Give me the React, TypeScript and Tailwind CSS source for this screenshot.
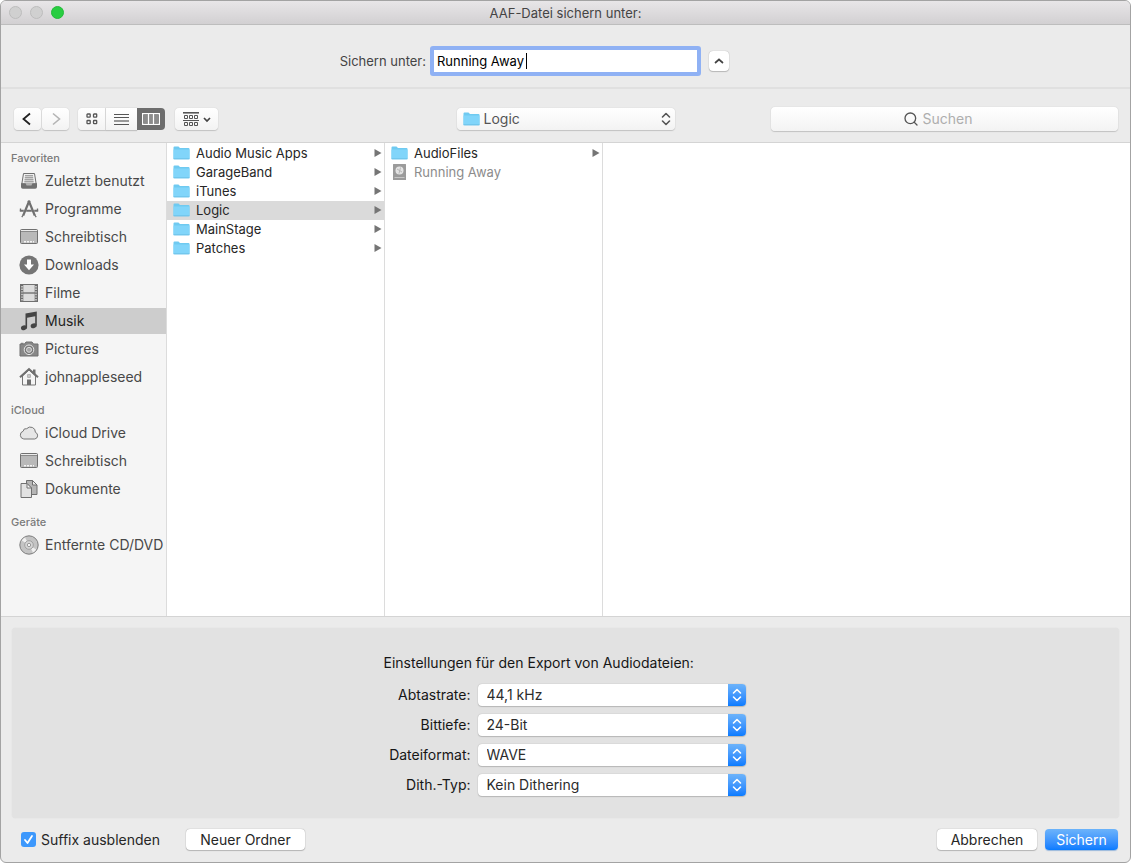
import type { ReactNode } from 'react';
import { Search } from 'lucide-react';

const RecentIcon = () => (
  <svg viewBox="0 0 20 20" className="w-5 h-5">
    <path d="M4.5 2.5h11l1.7 10.5H2.8z" fill="#f0f0f0" stroke="#707070" />
    <path d="M6 4.8h8M5.8 6.8h8.4M5.5 8.8h9M5.3 10.8h9.4" stroke="#808080" />
    <path d="M2 12.3h4.5l1 2h5l1-2H18V16a1.8 1.8 0 0 1-1.8 1.8H3.8A1.8 1.8 0 0 1 2 16z" fill="#707070" />
  </svg>
);

const AppsIcon = () => (
  <svg viewBox="0 0 20 20" className="w-5 h-5" fill="none" stroke="#707070">
    <path d="M10 2.5 4.2 16.5M10 2.5l5.8 14" strokeWidth="2.2" />
    <path d="M.8 11.8h4M7.2 11.8h5.6M15.2 11.8h4" strokeWidth="2" />
    <path d="M1.5 9.5v2.3M18.5 9.5v2.3M4.2 16l-1.4 2.2M15.8 16l1.4 2.2" strokeWidth="1.3" />
    <circle cx="10" cy="2.6" r="1.4" fill="#707070" stroke="none" />
  </svg>
);

const DesktopIcon = () => (
  <svg viewBox="0 0 20 20" className="w-5 h-5">
    <rect x="1.5" y="2.5" width="17" height="14" rx="1" fill="#b9b9b9" stroke="#707070" />
    <path d="M2 3.5h16" stroke="#ececec" />
    <path d="M2 4.5h16" stroke="#8a8a8a" />
    <path d="M5 14.8h2M8 14.8h2M11 14.8h2M14 14.8h1" stroke="#f4f4f4" strokeWidth="1.5" />
  </svg>
);

const DownloadIcon = () => (
  <svg viewBox="0 0 20 20" className="w-5 h-5">
    <circle cx="10" cy="10" r="9.6" fill="#757575" />
    <path d="M8 4.5h4v5h3L10 15.3 5 9.5h3z" fill="#fff" />
  </svg>
);

const FilmIcon = () => (
  <svg viewBox="0 0 20 20" className="w-5 h-5">
    <rect x="1.5" y="1.5" width="17" height="17" fill="#dcdcdc" stroke="#707070" />
    <path d="M3 2v16M17 2v16" stroke="#6b6b6b" strokeWidth="2.6" />
    <path d="M3 3v15M17 3v15" stroke="#e8e8e8" strokeWidth="1.3" strokeDasharray="1.4 1.2" />
    <path d="M4 10h12" stroke="#707070" strokeWidth="1.4" />
  </svg>
);

const MusicIcon = () => (
  <svg viewBox="0 0 20 20" className="w-5 h-5" fill="#454545">
    <path d="M6.5 2.4 17.8.6v13.6h-1.6V5.3L8.1 6.7v9.6H6.5z" />
    <ellipse cx="5" cy="16.8" rx="3.1" ry="2.3" transform="rotate(-18 5 16.8)" />
    <ellipse cx="14.7" cy="14.7" rx="3.1" ry="2.3" transform="rotate(-18 14.7 14.7)" />
  </svg>
);

const CameraIcon = () => (
  <svg viewBox="0 0 20 20" className="w-5 h-5">
    <path d="M1 5h4.500L7 3h6l1.500 2H19v12H1z" fill="#888" stroke="#707070" strokeLinejoin="round" />
    <path d="M2 4.300h2.500" stroke="#707070" />
    <circle cx="10" cy="10.800" r="4.800" fill="#777" stroke="#e6e6e6" />
    <circle cx="10" cy="10.800" r="2.500" fill="#a5a5a5" stroke="#dedede" />
  </svg>
);

const HomeIcon = () => (
  <svg viewBox="0 0 20 20" className="w-5 h-5">
    <path d="M3.500 9v9h13V9L10 3z" fill="#f5f5f5" stroke="#777" />
    <path d="M14 2.500h2.500V8L14 6z" fill="#707070" />
    <path d="m1 10.300 9-8.300 9 8.300" fill="none" stroke="#707070" strokeWidth="2" />
    <rect x="8" y="12.500" width="4" height="5.500" fill="#707070" />
    <rect x="8.800" y="7.800" width="2.400" height="2.400" fill="none" stroke="#999" />
  </svg>
);

const CloudIcon = () => (
  <svg viewBox="0 0 20 20" className="w-5 h-5">
    <path
      d="M4.800 16a4 4 0 0 1-.6-7.800 2.900 2.900 0 0 1 3.500-2.500 5 5 0 0 1 8.700 3.600 3.500 3.500 0 0 1-.6 6.700z"
      fill="#e6e6e6"
      stroke="#777"
    />
  </svg>
);

const DocumentsIcon = () => (
  <svg viewBox="0 0 20 20" className="w-5 h-5" stroke="#707070">
    <path d="M7.500 1.500h6l4.500 4.500v9.500H7.500z" fill="#b5b5b5" />
    <path d="M13.500 1.500V6H18z" fill="#eee" />
    <path d="M2 4.500h6l4.500 4.500v9.500H2z" fill="#e2e2e2" />
    <path d="M8 4.500V9h4.500z" fill="#f8f8f8" />
  </svg>
);

const DiscIcon = () => (
  <svg viewBox="0 0 20 20" className="w-5 h-5">
    <circle cx="10" cy="10" r="9.200" fill="#c4c4c4" stroke="#7c7c7c" />
    <path d="M10 10 2.800 5.500A8.600 8.600 0 0 1 6 2.500zM10 10l7.200 4.500a8.600 8.600 0 0 1-3.200 3z" fill="#f0f0f0" />
    <circle cx="10" cy="10" r="4.300" fill="#d6d6d6" stroke="#a0a0a0" />
    <circle cx="10" cy="10" r="1.700" fill="#f5f5f5" stroke="#999" />
  </svg>
);

const FolderIcon = () => (
  <svg viewBox="0 0 17 14" className="w-[17px] h-[14px] shrink-0">
    <path d="M.5 1.500q0-1 1-1h4l1.500 1.500h8.500q1 0 1 1V12.500q0 .8-1 .8H1.500q-1 0-1-.8z" fill="#6fcaf1" />
    <path d="M.5 3.500h16v9H.5z" fill="#81d5fa" />
    <path d="M.5 12.800h16" stroke="#70c4ea" />
  </svg>
);

const ProjectIcon = () => (
  <svg viewBox="0 0 17 16" className="w-[17px] h-4 shrink-0">
    <rect x="2" width="13" height="16" rx=".5" fill="#9b9b9b" />
    <circle cx="8.500" cy="6.500" r="4" fill="#e3e3e3" />
    <path d="m6 5 5 3M9.500 3.500 8 9.500" stroke="#b8b8b8" />
    <path d="M3.500 13.500h10" stroke="#c6c6c6" />
  </svg>
);

const Triangle = () => (
  <svg viewBox="0 0 8 8" className="w-2 h-2 shrink-0">
    <path d="M.5 0 7.500 4 .5 8z" fill="#757575" />
  </svg>
);

const UpDown = () => (
  <svg viewBox="0 0 10 14" className="w-[10px] h-[14px]" fill="none" stroke="currentColor" strokeWidth="1.600" strokeLinecap="round" strokeLinejoin="round">
    <path d="m1.500 5 3.500-3.500L8.500 5M1.500 9 5 12.500 8.500 9" />
  </svg>
);

const sections = [
  {
    title: 'Favoriten',
    items: [
      { name: 'Zuletzt benutzt', icon: RecentIcon },
      { name: 'Programme', icon: AppsIcon },
      { name: 'Schreibtisch', icon: DesktopIcon },
      { name: 'Downloads', icon: DownloadIcon },
      { name: 'Filme', icon: FilmIcon },
      { name: 'Musik', icon: MusicIcon, active: true },
      { name: 'Pictures', icon: CameraIcon },
      { name: 'johnappleseed', icon: HomeIcon },
    ],
  },
  {
    title: 'iCloud',
    items: [
      { name: 'iCloud Drive', icon: CloudIcon },
      { name: 'Schreibtisch', icon: DesktopIcon },
      { name: 'Dokumente', icon: DocumentsIcon },
    ],
  },
  {
    title: 'Geräte',
    items: [{ name: 'Entfernte CD/DVD', icon: DiscIcon }],
  },
];

const columns = [
  [
    { name: 'Audio Music Apps', folder: true },
    { name: 'GarageBand', folder: true },
    { name: 'iTunes', folder: true },
    { name: 'Logic', folder: true, active: true },
    { name: 'MainStage', folder: true },
    { name: 'Patches', folder: true },
  ],
  [
    { name: 'AudioFiles', folder: true },
    { name: 'Running Away', folder: false },
  ],
];

const settings = [
  { id: 'rate', label: 'Abtastrate:', value: '44,1 kHz' },
  { id: 'depth', label: 'Bittiefe:', value: '24-Bit' },
  { id: 'format', label: 'Dateiformat:', value: 'WAVE' },
  { id: 'dither', label: 'Dith.-Typ:', value: 'Kein Dithering' },
];

const toolbarButton =
  'flex items-center justify-center h-[22px] bg-linear-to-b from-white to-[#f3f3f3] shadow-[0_0_1px_#b5b5b5,0_1px_1px_#c4c4c4]';

function ToolbarButton({ label, className, children }: { label: string; className: string; children: ReactNode }) {
  return (
    <button type="button" aria-label={label} className={`${toolbarButton} ${className}`}>
      {children}
    </button>
  );
}

function Toolbar() {
  return (
    <div className="grid grid-cols-[1fr_218px_1fr] items-center h-[54px] pt-[7px] px-3 border-b border-[#d4d4d4]">
      <div className="flex items-center pl-px">
        <ToolbarButton label="Zurück" className="w-[27px] rounded-sm mr-px">
          <svg viewBox="0 0 12 14" className="w-3 h-[14px] mr-[3px]" fill="none" stroke="#222" strokeWidth="1.800">
            <path d="M10 1.500 3.500 7l6.500 5.500" />
          </svg>
        </ToolbarButton>
        <ToolbarButton label="Vorwärts" className="w-[27px] rounded-sm mr-[9px]">
          <svg viewBox="0 0 12 14" className="w-3 h-[14px]" fill="none" stroke="#b4b4b4" strokeWidth="1.600">
            <path d="M3 1.500 9.500 7 3 12.500" />
          </svg>
        </ToolbarButton>
        <ToolbarButton label="Symbole" className="w-7 rounded-l-sm border-r border-[#e2e2e2]">
          <svg viewBox="0 0 12 12" className="w-3 h-3" fill="none" stroke="#555" strokeWidth="1.300">
            <rect x="1" y="1" width="3.200" height="3.200" rx=".6" />
            <rect x="7.500" y="1" width="3.200" height="3.200" rx=".6" />
            <rect x="1" y="7.500" width="3.200" height="3.200" rx=".6" />
            <rect x="7.500" y="7.500" width="3.200" height="3.200" rx=".6" />
          </svg>
        </ToolbarButton>
        <ToolbarButton label="Liste" className="w-[31px]">
          <svg viewBox="0 0 15 11" className="w-[15px] h-[11px]">
            <path d="M0 .5h15M0 3.500h15M0 10.500h15" stroke="#555" />
            <path d="M0 7h15" stroke="#999" strokeWidth="2" />
          </svg>
        </ToolbarButton>
        <button type="button" aria-label="Spalten" className="flex items-center justify-center w-7 h-[22px] rounded-r-sm bg-[#6d6d6d]">
          <svg viewBox="0 0 18 12" className="w-[18px] h-3">
            <path d="M2 2h4v8H2zM7 2h4v8H7zM12 2h4v8h-4z" fill="#8c8c8c" />
            <path d="M.6.600h16.800v10.800H.6zM6.500 1v10M11.500 1v10" fill="none" stroke="#fff" strokeWidth="1.200" />
          </svg>
        </button>
        <ToolbarButton label="Gruppieren" className="w-[43px] rounded-sm ml-[10px] gap-1">
          <svg viewBox="0 0 16 14" className="w-4 h-[14px]" fill="none" stroke="#555">
            <path d="M0 .5h16M0 8.500h16" />
            <path d="M0 1.500h16" stroke="#999" />
            <path d="M1.500 3.500h3v3h-3zM6.500 3.500h3v3h-3zM11.500 3.500h3v3h-3zM1.500 10.500h3v3h-3zM6.500 10.500h3v3h-3zM11.500 10.500h3v3h-3z" />
          </svg>
          <svg viewBox="0 0 8 6" className="w-2 h-1.5 mt-0.5" fill="none" stroke="#444" strokeWidth="1.700">
            <path d="m1 1 3 3 3-3" />
          </svg>
        </ToolbarButton>
      </div>

      <div className="relative text-[#555]">
        <select aria-label="Ordner" className="block w-full h-[22px] pl-[27px] appearance-none rounded-sm bg-linear-to-b from-white to-[#f3f3f3] shadow-[0_0_1px_#b5b5b5,0_1px_1px_#c4c4c4]">
          <option>Logic</option>
        </select>
        <span className="absolute inset-y-0 left-[6px] flex items-center pointer-events-none">
          <FolderIcon />
        </span>
        <span className="absolute inset-y-0 right-1 flex items-center pointer-events-none">
          <UpDown />
        </span>
      </div>

      <label className="flex items-center justify-center gap-1 w-[347px] h-6 ml-auto rounded-sm bg-linear-to-b from-white to-[#f3f3f3] shadow-[0_0_1px_#b5b5b5,0_1px_1px_#c4c4c4]">
        <Search className="w-4 h-4 text-[#555]" strokeWidth={2} />
        <input type="text" aria-label="Suchen" placeholder="Suchen" className="w-16 outline-none placeholder:text-[#aeaeae]" />
      </label>
    </div>
  );
}

function Sidebar() {
  return (
    <nav className="flex flex-col gap-[10px] w-[166px] shrink-0 pt-[6px] bg-[#f5f5f5] border-r border-[#dcdcdc]">
      {sections.map((section) => (
        <section key={section.title}>
          <h2 className="pl-[10px] text-[11px] leading-[18px] font-medium text-[#7a7a7a]">{section.title}</h2>
          <ul>
            {section.items.map((item) => (
              <li key={item.name} className="py-px">
                <a
                  href="#"
                  className={`flex items-center gap-[6px] h-[26px] pl-[18px] whitespace-nowrap ${
                    'active' in item ? 'bg-[#cdcdcd] text-[#1f1f1f]' : 'text-[#484848]'
                  }`}
                >
                  <item.icon />
                  {item.name}
                </a>
              </li>
            ))}
          </ul>
        </section>
      ))}
    </nav>
  );
}

function FileColumns() {
  return (
    <div className="flex flex-1 bg-white text-[13px]">
      {columns.map((files, i) => (
        <ul key={i} className="w-[218px] shrink-0 pt-px border-r border-[#dcdcdc]">
          {files.map((file) => (
            <li
              key={file.name}
              className={`flex items-center gap-[6px] h-[19px] pb-0.5 pl-[6px] pr-[2px] ${
                'active' in file ? 'bg-[#dadada]' : ''
              } ${file.folder ? 'text-[#262626]' : 'text-[#8c8c8c]'}`}
            >
              {file.folder ? <FolderIcon /> : <ProjectIcon />}
              <span className="flex-1">{file.name}</span>
              {file.folder && <Triangle />}
            </li>
          ))}
        </ul>
      ))}
    </div>
  );
}

function ExportSettings() {
  return (
    <fieldset className="mx-[11px] mt-[11px] pt-[25px] pb-[22px] pr-[2px] rounded-sm bg-[#e2e2e2] text-[#161616] shadow-[0_0_1px_#c8c8c8]">
      <div className="w-[362px] mx-auto">
        <h2 className="leading-5">Einstellungen für den Export von Audiodateien:</h2>
        <div className="flex flex-col gap-2 mt-[11px]">
          {settings.map((setting) => (
            <div key={setting.id} className="flex items-center gap-[7px]">
              <label htmlFor={setting.id} className="w-[87px] text-right">
                {setting.label}
              </label>
              <div className="relative flex-1">
                <select
                  id={setting.id}
                  className="block w-full h-[22px] pl-[9px] appearance-none rounded-sm bg-white text-[#2c2c2c] shadow-[0_0_1px_#999,0_1px_1px_#bbb]"
                >
                  <option>{setting.value}</option>
                </select>
                <span className="absolute inset-y-0 right-0 flex items-center justify-center w-[18px] rounded-r-sm bg-linear-to-b from-[#6cb3fa] to-[#067bff] text-white pointer-events-none">
                  <UpDown />
                </span>
              </div>
            </div>
          ))}
        </div>
      </div>
    </fieldset>
  );
}

export default function App() {
  return (
    <div className="min-h-screen flex flex-col pb-0.5 bg-white font-['Inter','Liberation_Sans',sans-serif] text-[14px] leading-4">
      <main className="flex-1 flex flex-col rounded-md border border-[#a3a3a3] bg-[#ebebeb] overflow-hidden">
        <header className="grid grid-cols-[1fr_auto_1fr] items-center h-6 bg-linear-to-b from-[#e8e6e8] to-[#d2d0d2] border-b border-[#bdbdbd]">
          <div className="flex gap-2 pl-2">
            <button type="button" aria-label="Schließen" className="w-[13px] h-[13px] rounded-full bg-[#d0d0d0] border border-[#bcbcbc]" />
            <button type="button" aria-label="Minimieren" className="w-[13px] h-[13px] rounded-full bg-[#d0d0d0] border border-[#bcbcbc]" />
            <button type="button" aria-label="Vergrößern" className="w-[13px] h-[13px] rounded-full bg-[#28cd41] border border-[#24bb3a]" />
          </div>
          <h1 className="text-[13px] text-[#444]">AAF-Datei sichern unter:</h1>
        </header>

        <div className="grid grid-cols-[1fr_271px_1fr] items-center h-16 pt-[10px] border-b-2 border-[#e0e0e0] text-[13px]">
          <label htmlFor="filename" className="pr-1 text-right text-[#444]">
            Sichern unter:
          </label>
          <div className="relative">
            <input
              id="filename"
              defaultValue="Running Away"
              className="block w-full h-[30px] pl-[3px] rounded-[3px] border-4 border-[#8fb1f4] bg-white text-black outline-none"
            />
            <span className="absolute left-[96px] top-[7px] w-px h-4 bg-black pointer-events-none" />
          </div>
          <button
            type="button"
            aria-label="Weniger anzeigen"
            className="flex items-center justify-center w-5 h-5 ml-2 rounded-sm bg-white shadow-[0_0_1px_#999,0_1px_1px_#bbb]"
          >
            <svg viewBox="0 0 10 6" className="w-[10px] h-1.5" fill="none" stroke="#444" strokeWidth="1.700">
              <path d="m1 5 4-3.500L9 5" />
            </svg>
          </button>
        </div>

        <Toolbar />

        <div className="flex-1 flex border-b border-[#d4d4d4]">
          <Sidebar />
          <FileColumns />
        </div>

        <ExportSettings />

        <footer className="flex items-center h-11 pb-px pl-5 pr-3 text-[#262626]">
          <label className="flex items-center gap-[5px]">
            <span className="grid w-[15px] h-[15px]">
              <input type="checkbox" defaultChecked className="[grid-area:1/1] appearance-none w-full h-full rounded-[3px] bg-[#3d98fc]" />
              <svg viewBox="0 0 15 15" className="[grid-area:1/1] pointer-events-none" fill="none" stroke="#fff" strokeWidth="1.800" strokeLinecap="round" strokeLinejoin="round">
                <path d="m4 8 2.500 3L11 4" />
              </svg>
            </span>
            Suffix ausblenden
          </label>
          <button type="button" className="w-[119px] h-[21px] ml-[26px] mr-auto rounded-sm bg-white shadow-[0_0_1px_#888,0_1px_1px_#bbb]">
            Neuer Ordner
          </button>
          <button type="button" className="w-[100px] h-[21px] mr-2 rounded-sm bg-white shadow-[0_0_1px_#888,0_1px_1px_#bbb]">
            Abbrechen
          </button>
          <button type="button" className="w-[73px] h-[21px] rounded-sm bg-linear-to-b from-[#6cb3fa] to-[#067bff] text-white shadow-[0_1px_1px_#9ab8dc]">
            Sichern
          </button>
        </footer>
      </main>
    </div>
  );
}
